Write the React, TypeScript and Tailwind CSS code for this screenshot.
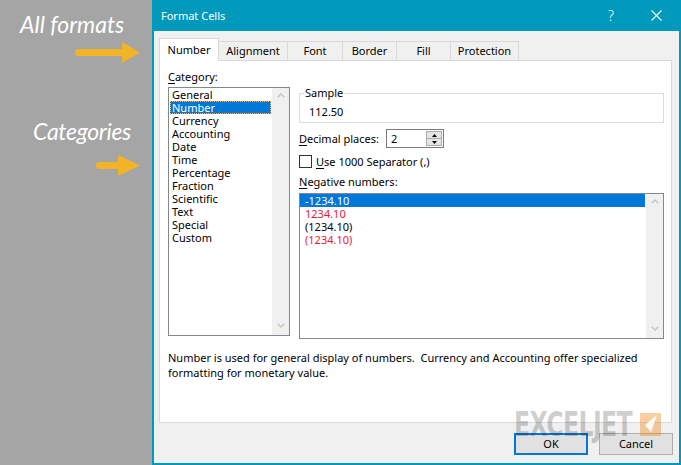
import React from "react";

const categories = [
  "General",
  "Number",
  "Currency",
  "Accounting",
  "Date",
  "Time",
  "Percentage",
  "Fraction",
  "Scientific",
  "Text",
  "Special",
  "Custom",
];

function Chevron({ up }: { up?: boolean }) {
  return (
    <svg width="8" height="5" viewBox="0 0 8 5" className="block">
      <polyline
        points={up ? "0.7,4.3 4,1 7.3,4.3" : "0.7,0.7 4,4 7.3,0.7"}
        fill="none"
        stroke="#c4c4c4"
        strokeWidth="1.4"
      />
    </svg>
  );
}

function ScrollBar() {
  return (
    <div className="w-[17px] bg-[#f0f0f0] flex flex-col justify-between items-center pt-[5px] pb-[7px]">
      <Chevron up />
      <Chevron />
    </div>
  );
}

function Arrow({ w, shaft }: { w: number; shaft: number }) {
  return (
    <svg width={w} height="21" viewBox={`0 0 ${w} 21`} className="block">
      <rect x="0" y="7" width={shaft + 3} height="7" rx="3.5" fill="#f2b426" />
      <polygon points={`${shaft},0 ${w},10.5 ${shaft},21`} fill="#f2b426" />
    </svg>
  );
}

function LeftPane() {
  return (
    <div className="w-[152px] h-[465px] shrink-0 bg-[#a5a5a5] flex flex-col pt-[10px] font-['Lato',sans-serif] italic text-white">
      <div className="pl-[20px] text-[23px] leading-[28px]">All formats</div>
      <div className="ml-[75px] mt-[4px]">
        <Arrow w={65} shaft={47} />
      </div>
      <div className="pl-[33px] mt-[54px] text-[23px] leading-[28px] tracking-[-0.3px]">Categories</div>
      <div className="ml-[96px] mt-[10px]">
        <Arrow w={44} shaft={22} />
      </div>
    </div>
  );
}

function TitleBar() {
  return (
    <div className="h-[31px] shrink-0 bg-[#0099bc] flex items-center pl-[9px] pr-[19px] text-white">
      <span className="leading-[14px]">Format Cells</span>
      <span className="ml-auto text-[14px] leading-[14px] font-light">?</span>
      <svg width="11" height="11" viewBox="0 0 11 11" className="ml-[37px] block">
        <line x1="0.5" y1="0.5" x2="10.5" y2="10.5" stroke="white" strokeWidth="1.1" />
        <line x1="10.5" y1="0.5" x2="0.5" y2="10.5" stroke="white" strokeWidth="1.1" />
      </svg>
    </div>
  );
}

function Tabs() {
  return (
    <div className="flex items-end h-[22px] shrink-0">
      <div className="relative z-10 -mb-px h-[23px] w-[60px] bg-white border-l border-t border-r border-[#d9d9d9] flex items-center justify-center leading-[14px]">
        Number
      </div>
      <div className="h-[19px] w-[69px] border-t border-r border-[#d9d9d9] flex items-center justify-center leading-[14px]">
        Alignment
      </div>
      <div className="h-[19px] w-[55px] border-t border-r border-[#d9d9d9] flex items-center justify-center leading-[14px]">
        Font
      </div>
      <div className="h-[19px] w-[54px] border-t border-r border-[#d9d9d9] flex items-center justify-center leading-[14px]">
        Border
      </div>
      <div className="h-[19px] w-[54px] border-t border-r border-[#d9d9d9] flex items-center justify-center leading-[14px]">
        Fill
      </div>
      <div className="h-[19px] w-[68px] border-t border-r border-[#d9d9d9] flex items-center justify-center leading-[14px]">
        Protection
      </div>
    </div>
  );
}

function CategoryList() {
  return (
    <div className="h-[249px] border border-[#828790] bg-white flex">
      <div className="flex-1 flex flex-col pt-0">
        {categories.map((c) =>
          c === "Number" ? (
            <div
              key={c}
              className="mx-[1px] h-[13px] leading-[12px] px-[1px] bg-[#0078d7] text-white border border-dotted border-[#f3b06a]"
            >
              {c}
            </div>
          ) : (
            <div key={c} className="h-[13px] leading-[13px] px-[3px]">
              {c}
            </div>
          )
        )}
      </div>
      <ScrollBar />
    </div>
  );
}

function NegativeList() {
  return (
    <div className="h-[146px] border border-[#828790] bg-white flex">
      <div className="flex-1 flex flex-col">
        <div className="h-[13px] leading-[13px] pl-[5px] bg-[#0078d7] text-white mr-[1px]">-1234.10</div>
        <div className="h-[13px] leading-[13px] pl-[5px] text-[#ec1a30]">1234.10</div>
        <div className="h-[13px] leading-[13px] pl-[5px]">(1234.10)</div>
        <div className="h-[13px] leading-[13px] pl-[5px] text-[#ec1a30]">(1234.10)</div>
      </div>
      <ScrollBar />
    </div>
  );
}

function Spinner() {
  return (
    <div className="w-[58px] h-[19px] border border-[#7a7a7a] bg-white flex">
      <div className="flex-1 pl-[4px] leading-[17px]">2</div>
      <div className="w-[16px] my-[1px] mr-[1px] flex flex-col">
        <div className="flex-1 bg-[#e5e5e5] border border-[#acacac] flex items-center justify-center">
          <svg width="5" height="3" viewBox="0 0 5 3" className="block">
            <polygon points="0,3 2.5,0 5,3" fill="#000" />
          </svg>
        </div>
        <div className="flex-1 bg-[#e5e5e5] border border-t-0 border-[#acacac] flex items-center justify-center">
          <svg width="5" height="3" viewBox="0 0 5 3" className="block">
            <polygon points="0,0 2.5,3 5,0" fill="#000" />
          </svg>
        </div>
      </div>
    </div>
  );
}

function Panel() {
  return (
    <div className="h-[363px] shrink-0 border border-[#d9d9d9] bg-white pl-[8px] pr-[7px] pt-[9px] flex flex-col">
      <div className="flex gap-[9px]">
        <div className="w-[122px] flex flex-col">
          <div className="leading-[14px]">
            <span className="underline underline-offset-2">C</span>ategory:
          </div>
          <div className="mt-[3px]">
            <CategoryList />
          </div>
        </div>
        <div className="w-[365px] flex flex-col pt-[16px]">
          <fieldset className="h-[37px] border border-[#dcdcdc]">
            <legend className="ml-[4px] px-[1px] leading-[14px]">Sample</legend>
            <div className="pt-[5px] pl-[9px] leading-[14px]">112.50</div>
          </fieldset>
          <div className="mt-[6px] h-[19px] flex items-center">
            <div className="w-[87px] leading-[14px]">
              <span className="underline underline-offset-2">D</span>ecimal places:
            </div>
            <Spinner />
          </div>
          <div className="mt-[7px] h-[13px] flex items-center gap-[4px]">
            <div className="w-[13px] h-[13px] border border-[#333333] bg-white" />
            <div className="leading-[14px]">
              <span className="underline underline-offset-2">U</span>se 1000 Separator (,)
            </div>
          </div>
          <div className="mt-[7px] leading-[14px]">
            <span className="underline underline-offset-2">N</span>egative numbers:
          </div>
          <div className="mt-[4px]">
            <NegativeList />
          </div>
        </div>
      </div>
      <div className="mt-[11px] leading-[15px] whitespace-pre">
        {"Number is used for general display of numbers.  Currency and Accounting offer specialized\nformatting for monetary value."}
      </div>
    </div>
  );
}

function Dialog() {
  return (
    <div className="relative w-[529px] h-[465px] shrink-0 flex flex-col font-['Noto_Sans',sans-serif] text-[11px] text-black">
      <TitleBar />
      <div className="flex-1 flex flex-col bg-[#f0f0f0] border-l-2 border-r-2 border-b-2 border-[#0099bc] pl-[5px] pr-[7px] pt-[7px]">
        <Tabs />
        <Panel />
        <div className="mt-[10px] -mr-[1px] flex justify-end gap-[11px]">
          <div className="w-[74px] h-[22px] border-2 border-[#0078d7] bg-[#e1e1e1] flex items-center justify-center leading-[14px]">
            OK
          </div>
          <div className="w-[74px] h-[22px] border border-[#adadad] bg-[#e1e1e1] flex items-center justify-center leading-[14px]">
            Cancel
          </div>
        </div>
      </div>
      <div className="absolute left-[362px] top-[408px] origin-left scale-x-[0.72] font-['DejaVu_Sans',sans-serif] font-bold text-[33px] leading-[33px] tracking-[-1px] text-black/[0.2] whitespace-nowrap pointer-events-none">
        EXCELJET
      </div>
      <svg
        width="21"
        height="23"
        viewBox="0 0 21 23"
        className="absolute left-[488px] top-[413px] pointer-events-none"
      >
        <rect x="0" y="0" width="21" height="23" fill="#f08a24" fillOpacity="0.42" />
        <polygon points="17,2 5,12 11,19" fill="#ffffff" fillOpacity="0.9" />
      </svg>
    </div>
  );
}

export default function App() {
  return (
    <div className="flex w-[681px] h-[465px] overflow-hidden bg-white">
      <LeftPane />
      <Dialog />
    </div>
  );
}
